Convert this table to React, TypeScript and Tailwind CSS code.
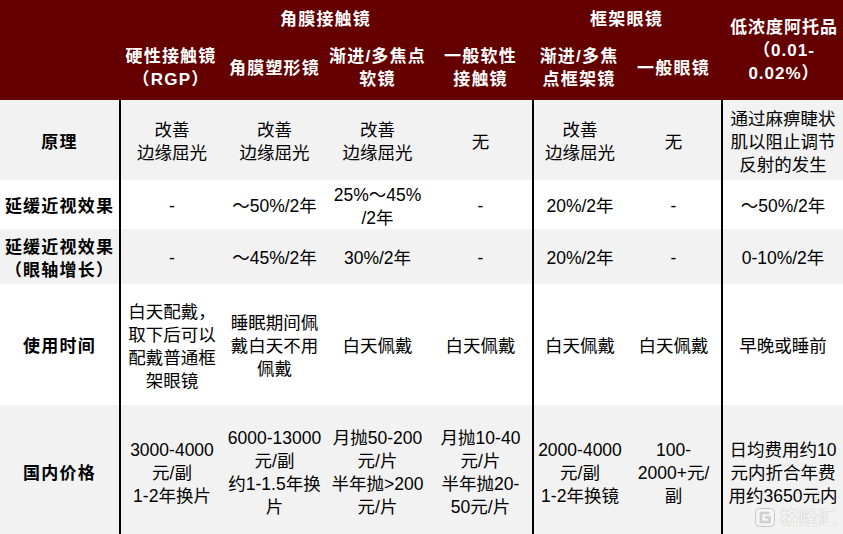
import React from 'react';

const FONT = '"Liberation Sans", "Noto Sans CJK SC", sans-serif';

type Row = {
  label: string[];
  cells: string[][];
  bg: string;
  h: string;
};

const rows: Row[] = [
  {
    label: ['原理'],
    bg: 'bg-[#f2f2f2]',
    h: 'h-[80px]',
    cells: [
      ['改善', '边缘屈光'],
      ['改善', '边缘屈光'],
      ['改善', '边缘屈光'],
      ['无'],
      ['改善', '边缘屈光'],
      ['无'],
      ['通过麻痹睫状', '肌以阻止调节', '反射的发生'],
    ],
  },
  {
    label: ['延缓近视效果'],
    bg: 'bg-white',
    h: 'h-[49px]',
    cells: [['-'], ['～50%/2年'], ['25%～45%', '/2年'], ['-'], ['20%/2年'], ['-'], ['～50%/2年']],
  },
  {
    label: ['延缓近视效果', '（眼轴增长）'],
    bg: 'bg-[#f2f2f2]',
    h: 'h-[55px]',
    cells: [['-'], ['～45%/2年'], ['30%/2年'], ['-'], ['20%/2年'], ['-'], ['0-10%/2年']],
  },
  {
    label: ['使用时间'],
    bg: 'bg-white',
    h: 'h-[121px]',
    cells: [
      ['白天配戴，', '取下后可以', '配戴普通框', '架眼镜'],
      ['睡眠期间佩', '戴白天不用', '佩戴'],
      ['白天佩戴'],
      ['白天佩戴'],
      ['白天佩戴'],
      ['白天佩戴'],
      ['早晚或睡前'],
    ],
  },
  {
    label: ['国内价格'],
    bg: 'bg-[#f2f2f2]',
    h: 'h-[132px]',
    cells: [
      ['3000-4000', '元/副', '1-2年换片'],
      ['6000-13000', '元/副', '约1-1.5年换', '片'],
      ['月抛50-200', '元/片', '半年抛>200', '元/片'],
      ['月抛10-40', '元/片', '半年抛20-', '50元/片'],
      ['2000-4000', '元/副', '1-2年换镜'],
      ['100-', '2000+元/', '副'],
      ['日均费用约10', '元内折合年费', '用约3650元内'],
    ],
  },
];

// columns that carry the black divider on their left edge (index into cells)
const divided = [0, 4, 6];

function Lines({ lines }: { lines: string[] }) {
  return (
    <div className="flex flex-col items-center whitespace-nowrap">
      {lines.map((l, i) => (
        <span key={i}>{l}</span>
      ))}
    </div>
  );
}

function Watermark() {
  return (
    <div className="absolute right-[6px] bottom-[6px] h-[21px] flex items-center gap-[4px]">
      <svg width="22" height="21" viewBox="0 0 22 21">
        <rect x="1.5" y="1.5" width="19" height="18" rx="4" fill="#f4f4f4" stroke="#c8c8c8" strokeWidth="1" />
        <path d="M15.5 6 H7 V15 H15.5 V10.5 H11" fill="none" stroke="#cfcfcf" strokeWidth="2.6" />
      </svg>
      <span
        className="block h-[20px] text-[18px] font-bold leading-[20px] text-[#f3f3f3] tracking-[1px]"
        style={{ textShadow: '0 0 1px #a8a8a8' }}
      >
        格隆汇
      </span>
    </div>
  );
}

export default function App() {
  return (
    <div
      className="relative w-[843px] h-[534px] overflow-hidden bg-white text-black"
      style={{ fontFamily: FONT }}
    >
      <div className="grid grid-cols-[119px_104px_103px_103px_103px_94px_95px_122px]">
        {/* header */}
        <div className="row-span-2 bg-[#640000]" />
        <div className="col-span-4 h-[38px] bg-[#640000] text-white font-bold text-[17px] tracking-[1.2px] flex items-center justify-center pt-[2px]">
          角膜接触镜
        </div>
        <div className="col-span-2 h-[38px] bg-[#640000] text-white font-bold text-[17px] tracking-[1.2px] flex items-center justify-center pt-[2px]">
          框架眼镜
        </div>
        <div className="row-span-2 bg-[#640000] text-white font-bold text-[17px] leading-[23px] tracking-[1px] flex items-center justify-center pl-[4px]">
          <Lines lines={['低浓度阿托品', '（0.01-', '0.02%）']} />
        </div>
        {[
          ['硬性接触镜', '（RGP）'],
          ['角膜塑形镜'],
          ['渐进/多焦点', '软镜'],
          ['一般软性', '接触镜'],
          ['渐进/多焦', '点框架镜'],
          ['一般眼镜'],
        ].map((lines, i) => (
          <div
            key={i}
            className="h-[62px] bg-[#640000] text-white font-bold text-[17px] leading-[23px] tracking-[1.2px] flex items-center justify-center pb-[2px]"
          >
            <Lines lines={lines} />
          </div>
        ))}

        {/* body */}
        {rows.map((r, ri) => (
          <React.Fragment key={ri}>
            <div
              className={`${r.bg} ${r.h} font-bold text-[17px] leading-[23px] tracking-[1.2px] flex items-center justify-center pt-[4px]`}
            >
              <Lines lines={r.label} />
            </div>
            {r.cells.map((c, ci) => (
              <div
                key={ci}
                className={`${r.bg} ${r.h} text-[17.5px] leading-[23px] flex items-center justify-center pt-[4px] ${
                  divided.includes(ci) ? 'border-l-2 border-black' : ''
                }`}
              >
                <Lines lines={c} />
              </div>
            ))}
          </React.Fragment>
        ))}
      </div>
      <Watermark />
    </div>
  );
}
